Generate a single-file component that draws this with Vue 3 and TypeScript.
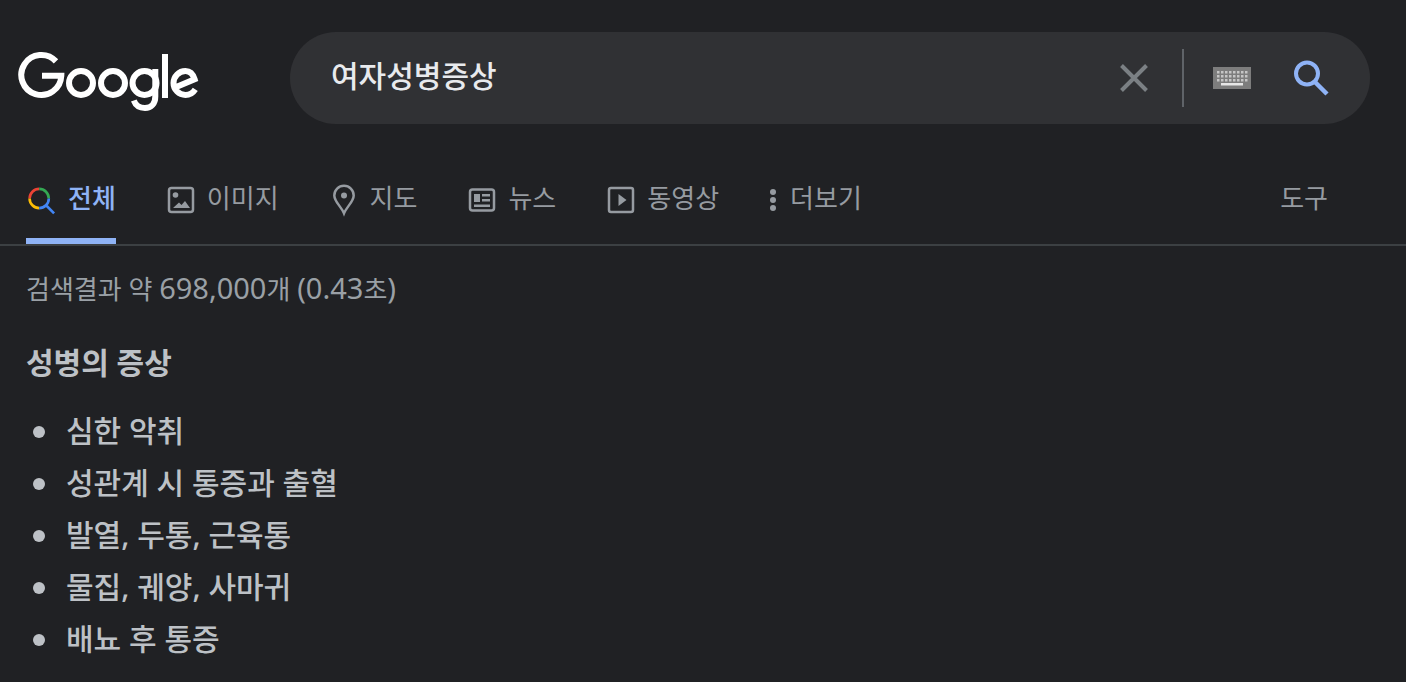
<script setup lang="ts">
import { ref } from 'vue'

const query = ref('여자성병증상')

interface Tab {
  id: string
  label: string
}

const tabs: Tab[] = [
  { id: 'all', label: '전체' },
  { id: 'images', label: '이미지' },
  { id: 'maps', label: '지도' },
  { id: 'news', label: '뉴스' },
  { id: 'videos', label: '동영상' },
]
const active = ref('all')

const symptoms: string[] = [
  '심한 악취',
  '성관계 시 통증과 출혈',
  '발열, 두통, 근육통',
  '물집, 궤양, 사마귀',
  '배뇨 후 통증',
]

const keyRows = [4, 8, 12]
const keyCols = [4, 8, 12, 16, 20, 24, 28, 32]
</script>

<template>
  <div class="page">
    <header class="header">
      <a class="logo" href="#" aria-label="Google">
        <svg width="182" height="62" viewBox="18 51 182 62" fill="none" stroke="#fff" stroke-width="6" aria-hidden="true">
          <path d="M56 61.4A20 20 0 1 0 61.3 75.8H42" />
          <circle cx="81" cy="83" r="12" />
          <circle cx="113" cy="83" r="12" />
          <circle cx="144.500" cy="83" r="12" />
          <path d="M155.300 69V96.500C155.300 104 151 108 145 108C139.500 108 135.500 105 133.800 100.500" />
          <path d="M165 54V98" />
          <path d="M175 87.500L194.600 79.200C193 74 189.500 71 185.500 71A12 12 0 0 0 185.500 95C190 95 193 92.800 195.300 89.300" />
        </svg>
      </a>
      <form class="search" role="search" @submit.prevent>
        <input v-model="query" class="query" type="text" aria-label="검색" />
        <button class="icon-btn clear" type="button" aria-label="지우기" @click="query = ''">
          <svg width="28" height="28" viewBox="0 0 28 28" fill="none" stroke="#7b8084" stroke-width="4">
            <path d="M1.500 1.500l25 25M26.500 1.500l-25 25" />
          </svg>
        </button>
        <span class="divider"></span>
        <button class="icon-btn keyboard" type="button" aria-label="입력 도구">
          <svg width="38" height="22" viewBox="0 0 38 22">
            <rect width="38" height="22" fill="#7d7d7d" />
            <g fill="#c6c6c6">
              <template v-for="y in keyRows" :key="y">
                <rect v-for="x in keyCols" :key="x" :x="x" :y="y" width="2.500" height="2.500" />
              </template>
            </g>
            <rect x="8" y="16" width="22" height="2.500" fill="#e6e6e6" />
          </svg>
        </button>
        <button class="icon-btn" type="submit" aria-label="Google 검색">
          <svg width="36" height="36" viewBox="0 0 36 36" fill="none" stroke="#8fb3f6" stroke-width="4">
            <circle cx="14" cy="13.500" r="11" />
            <path d="M22 22l12 12" stroke-width="4.500" />
          </svg>
        </button>
      </form>
    </header>

    <nav class="tabs">
      <a
        v-for="tab in tabs"
        :key="tab.id"
        class="tab"
        :class="{ active: tab.id === active }"
        href="#"
        @click.prevent="active = tab.id"
      >
        <svg v-if="tab.id === 'all'" class="tab-icon" viewBox="0 0 28 28" fill="none" stroke-width="2.600">
          <path d="M1.600 12.500A9.600 9.600 0 0 1 11.200 2.900" stroke="#ea4335" />
          <path d="M11.200 2.900A9.600 9.600 0 0 1 20.800 12.500" stroke="#34a853" />
          <path d="M1.600 12.500A9.600 9.600 0 0 0 11.200 22.100" stroke="#fbbc05" />
          <path d="M20.800 12.500A9.600 9.600 0 0 1 11.200 22.100M17.800 19l8.300 8.300" stroke="#4285f4" />
        </svg>
        <svg v-else-if="tab.id === 'images'" class="tab-icon" viewBox="0 0 28 28">
          <rect x="2" y="2" width="24" height="24" rx="2.500" fill="none" stroke="currentColor" stroke-width="2.500" />
          <circle cx="8.500" cy="9" r="2.800" fill="currentColor" />
          <path d="M6 22l6-5.500 2.500 2.500 3.500-4 5 7z" fill="currentColor" />
        </svg>
        <svg v-else-if="tab.id === 'maps'" class="tab-icon" viewBox="0 0 28 28">
          <path d="M14-.3a9.700 9.700 0 0 0-9.700 9.700C4.300 15.500 11.500 21 14 27.300C16.500 21 23.700 15.500 23.700 9.400A9.700 9.700 0 0 0 14-.3z" fill="none" stroke="currentColor" stroke-width="2.500" />
          <circle cx="14" cy="9.500" r="3" fill="currentColor" />
        </svg>
        <svg v-else-if="tab.id === 'news'" class="tab-icon" viewBox="0 0 28 28">
          <rect x="2" y="3.500" width="24" height="21" rx="2.500" fill="none" stroke="currentColor" stroke-width="2.500" />
          <path d="M6 8h6v8H6zM14 8h8v2.500h-8zM14 13h8v2.500h-8zM6 18.500h16v2.500H6z" fill="currentColor" />
        </svg>
        <svg v-else class="tab-icon" viewBox="0 0 28 28">
          <rect x="2" y="2" width="24" height="24" rx="2" fill="none" stroke="currentColor" stroke-width="2.500" />
          <path d="M11.500 8l8 6-8 6z" fill="currentColor" />
        </svg>
        <span>{{ tab.label }}</span>
      </a>
      <button class="tab more" type="button">
        <svg width="6" height="28" viewBox="0 0 6 28" fill="currentColor">
          <circle cx="3" cy="6" r="3" />
          <circle cx="3" cy="14" r="3" />
          <circle cx="3" cy="22" r="3" />
        </svg>
        <span>더보기</span>
      </button>
      <button class="tab tools" type="button"><span>도구</span></button>
    </nav>

    <main class="results">
      <p class="stats">검색결과 약 <span class="num">698,000</span>개 <span class="num">(0.43</span>초<span class="num">)</span></p>
      <h2 class="title">성병의 증상</h2>
      <ul class="list">
        <li v-for="item in symptoms" :key="item">{{ item }}</li>
      </ul>
    </main>
  </div>
</template>

<style>
body {
  margin: 0;
  background: #202124;
}
</style>

<style scoped>
.page {
  box-sizing: border-box;
  min-height: 100vh;
  background: #202124;
  color: #bdc1c6;
  font-family: "Noto Sans", "Noto Sans CJK KR", sans-serif;
}

.header {
  display: flex;
  align-items: center;
  gap: 90px;
  padding: 32px 36px 0 18px;
}

.logo {
  display: flex;
  flex: none;
  margin-top: 8px;
}

.search {
  display: flex;
  flex: 1;
  align-items: center;
  box-sizing: border-box;
  height: 92px;
  padding: 0 41px;
  border-radius: 46px;
  background: #303134;
}

.query {
  flex: 1;
  min-width: 0;
  height: 60px;
  margin-bottom: 8px;
  padding: 0;
  border: 0;
  outline: 0;
  background: transparent;
  color: #e8eaed;
  font-family: inherit;
  font-size: 30px;
  font-weight: 500;
}

.icon-btn {
  display: flex;
  flex: none;
  padding: 0;
  border: 0;
  background: none;
  cursor: pointer;
}

.divider {
  width: 2px;
  height: 58px;
  margin: 0 29px 0 34px;
  background: #5f6368;
}

.keyboard {
  margin-right: 42px;
}

.tabs {
  display: flex;
  gap: 51px;
  height: 86px;
  margin-top: 34px;
  padding: 0 78px 0 26px;
  border-bottom: 2px solid #3c4043;
}

.tab {
  display: flex;
  align-items: center;
  gap: 12px;
  box-sizing: border-box;
  height: 86px;
  padding: 4px 0 0;
  border: 0;
  border-bottom: 6px solid transparent;
  background: none;
  color: #969ba1;
  font-family: inherit;
  font-size: 26px;
  line-height: 36px;
  text-decoration: none;
  white-space: nowrap;
  cursor: pointer;
}

.tab:first-child {
  padding-left: 2px;
}

.tab span {
  margin-bottom: 4px;
}

.tab.active {
  border-bottom-color: #8fb3f6;
  color: #8fb3f6;
  font-weight: 500;
}

.tab-icon {
  flex: none;
  width: 28px;
  height: 28px;
  overflow: visible;
}

.more {
  gap: 14px;
}

.tools {
  margin-left: auto;
}

.results {
  padding: 22px 26px 0;
}

.stats {
  margin: 0;
  color: #9aa0a6;
  font-size: 26px;
  line-height: 40px;
}

.num {
  font-size: 29px;
}

.title {
  margin: 32px 0 0;
  font-size: 30px;
  font-weight: 700;
  line-height: 44px;
}

.list {
  margin: 20px 0 0;
  padding: 0 0 12px 7px;
  font-size: 30px;
  font-weight: 500;
  line-height: 52px;
  list-style: none;
}

.list li {
  display: flex;
  align-items: center;
  gap: 21px;
}

.list li::before {
  content: "";
  width: 12px;
  height: 12px;
  margin-top: 2px;
  border-radius: 50%;
  background: currentColor;
}
</style>
